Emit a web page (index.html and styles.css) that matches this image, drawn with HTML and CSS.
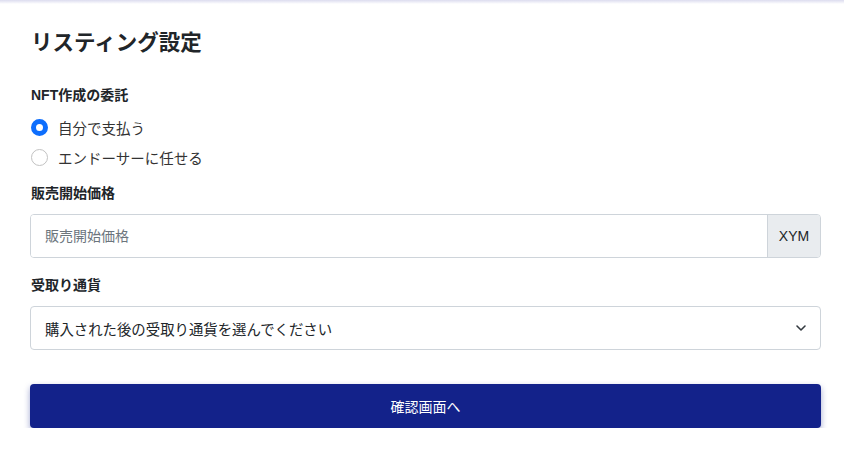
FILE: index.html
```html
<!DOCTYPE html>
<html>
<head>
    <title>リスティング設定</title>
    <link rel="stylesheet" href="styles.css">
</head>
<body>
    <div class="topShade"></div>
    <div class="card">
        <h1>リスティング設定</h1>
        <form id="listingForm">
            <div class="fieldLabel">NFT作成の委託</div>
            <div class="radioList">
                <label class="radioRow">
                    <input type="radio" name="payer" value="self" checked>
                    <span>自分で支払う</span>
                </label>
                <label class="radioRow">
                    <input type="radio" name="payer" value="endorser">
                    <span>エンドーサーに任せる</span>
                </label>
            </div>

            <div class="fieldLabel">販売開始価格</div>
            <div class="inputGroup">
                <input type="text" placeholder="販売開始価格">
                <span class="addon">XYM</span>
            </div>

            <div class="fieldLabel gapTop">受取り通貨</div>
            <div class="selectBox">
                <span>購入された後の受取り通貨を選んでください</span>
                <svg width="12" height="8" viewBox="0 0 12 8">
                    <path d="M2 2 L6 6 L10 2" fill="none" stroke="#343a40" stroke-width="1.6" stroke-linecap="round" stroke-linejoin="round"/>
                </svg>
            </div>

            <button type="button" class="submitBtn">確認画面へ</button>
        </form>
    </div>
</body>
</html>
```

FILE: styles.css
```css
body {
    font-family: "Liberation Sans", "Noto Sans CJK JP", sans-serif;
    background-color: #fff;
    color: #212529;
    margin: 0;
}

.topShade {
    height: 4px;
    background: linear-gradient(#dcdcef, #ffffff);
}

.card {
    padding: 24px 23px 0 30px;
}

h1 {
    font-size: 21.5px;
    line-height: 30px;
    font-weight: bold;
    margin: 0 0 27px 1px;
    color: #212529;
}

.fieldLabel {
    font-size: 14px;
    line-height: 20px;
    font-weight: bold;
    margin-left: 1px;
}

.gapTop {
    margin-top: 17px;
}

.radioList {
    margin: 7px 0 11px;
}

.radioRow {
    display: flex;
    align-items: center;
    height: 30px;
    font-size: 14.5px;
    color: #333;
    cursor: pointer;
}

.radioRow input {
    appearance: none;
    width: 17px;
    height: 17px;
    margin: 0 10px 0 1px;
    border: 1px solid #c2c2c2;
    border-radius: 50%;
    box-sizing: border-box;
    background: #fff;
}

.radioRow input:checked {
    border: 5px solid #0d6efd;
}

.inputGroup {
    display: flex;
    height: 44px;
    margin-top: 11px;
    border: 1px solid #ced4da;
    border-radius: 4px;
    box-sizing: border-box;
    overflow: hidden;
}

.inputGroup input {
    flex: 1;
    border: none;
    padding: 0 14px;
    font-size: 14px;
    font-family: inherit;
    outline: none;
}

.inputGroup input::placeholder {
    color: #6c757d;
}

.addon {
    width: 52px;
    display: flex;
    align-items: center;
    justify-content: center;
    background-color: #e9ecef;
    border-left: 1px solid #ced4da;
    font-size: 14px;
}

.selectBox {
    display: flex;
    align-items: center;
    justify-content: space-between;
    height: 44px;
    margin-top: 11px;
    padding: 0 13px 0 14px;
    border: 1px solid #ced4da;
    border-radius: 4px;
    box-sizing: border-box;
    font-size: 14.4px;
}

.submitBtn {
    display: block;
    width: 100%;
    height: 44px;
    margin-top: 34px;
    background-color: #13228a;
    color: #fff;
    border: none;
    border-radius: 4px;
    font-size: 14px;
    font-family: inherit;
    box-shadow: 0 3px 6px rgba(19, 34, 138, 0.4);
    cursor: pointer;
}
```
